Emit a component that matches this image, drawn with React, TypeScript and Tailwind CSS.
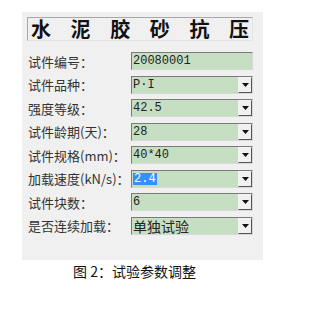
import React from 'react';

interface Row {
  label: string;
  value: string;
  dropdown: boolean;
  selected?: boolean;
  cjk?: boolean;
}

const rows: Row[] = [
  { label: '试件编号：', value: '20080001', dropdown: false },
  { label: '试件品种：', value: 'P·I', dropdown: true },
  { label: '强度等级：', value: '42.5', dropdown: true },
  { label: '试件龄期(天)：', value: '28', dropdown: true },
  { label: '试件规格(mm)：', value: '40*40', dropdown: true },
  { label: '加载速度(kN/s)：', value: '2.4', dropdown: true, selected: true },
  { label: '试件块数：', value: '6', dropdown: true },
  { label: '是否连续加载：', value: '单独试验', dropdown: true, cjk: true },
];

const titleChars = ['水', '泥', '胶', '砂', '抗', '压'];

const Field: React.FC<{ row: Row }> = ({ row }) => (
  <div className="flex h-[18px] w-[122px] border border-t-[#7a7a7a] border-l-[#7a7a7a] border-b-[#d8d8d8] border-r-[#d8d8d8] bg-[#c6dfc3]">
    <div
      className={`flex flex-1 items-center pl-[1px] text-[12px] leading-none text-[#222] ${
        row.cjk ? "font-['Noto_Sans_CJK_SC',sans-serif] text-[14px]" : "font-['Liberation_Mono',monospace]"
      }`}
    >
      {row.selected ? <span className="bg-[#3390ff] px-[1px] text-white">{row.value}</span> : row.value}
    </div>
    {row.dropdown && (
      <div className="flex w-[14px] items-center justify-center border border-t-[#f4f4f4] border-l-[#f4f4f4] border-b-[#555] border-r-[#555] bg-[#f0f0f0]">
        <svg width="7" height="4" viewBox="0 0 7 4">
          <path d="M0 0h7L3.5 4z" fill="#111" />
        </svg>
      </div>
    )}
  </div>
);

export default function App() {
  return (
    <div className="h-[310px] w-[314px] bg-white font-['Noto_Sans_CJK_SC',sans-serif]">
      <div className="h-[12px]" />
      <div className="ml-[22px] h-[248px] w-[241px] bg-[#f0f0f0] pl-[5px] pt-[5px]">
        <div className="flex h-[24px] w-[226px] items-center justify-between border border-t-[#a8a8a8] border-l-[#a8a8a8] border-b-[#e4e4e4] border-r-[#e4e4e4] px-[3px] text-[20px] font-semibold leading-none text-[#111]">
          {titleChars.map((c) => (
            <span key={c}>{c}</span>
          ))}
        </div>
        <div className="mt-[11px] flex flex-col gap-[5.5px]">
          {rows.map((row) => (
            <div key={row.label} className="flex items-center">
              <div className="w-[104px] pl-[1px] text-[13px] leading-none text-[#333] whitespace-nowrap">{row.label}</div>
              <Field row={row} />
            </div>
          ))}
        </div>
      </div>
      <div className="ml-[73px] mt-[4px] text-[14px] leading-none text-[#111]">图 2：试验参数调整</div>
    </div>
  );
}
